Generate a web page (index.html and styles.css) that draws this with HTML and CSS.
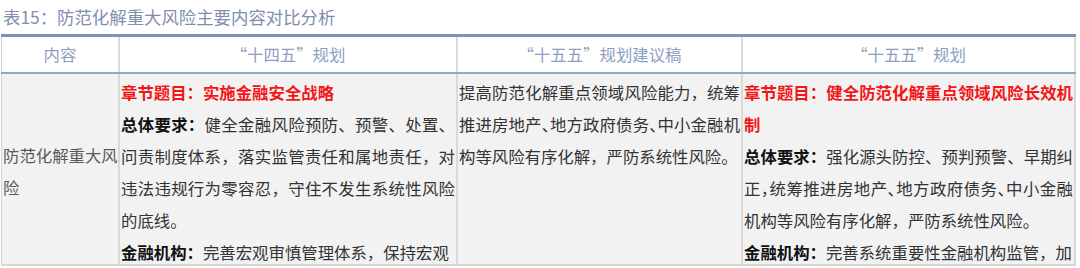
FILE: index.html
```html
<!DOCTYPE html>
<html lang="zh-CN">
<head>
<meta charset="utf-8">
<title>表15：防范化解重大风险主要内容对比分析</title>
<link rel="stylesheet" href="styles.css">
</head>
<body>
<div class="page">
  <div class="caption">表15：防范化解重大风险主要内容对比分析</div>
  <div class="table">
    <div class="row head">
      <div class="cell c1">内容</div>
      <div class="cell c2">“十四五”规划</div>
      <div class="cell c3">“十五五”规划建议稿</div>
      <div class="cell c4">“十五五”规划</div>
    </div>
    <div class="row body">
      <div class="cell c1 topic"><span>防范化解重大风险</span></div>
      <div class="cell c2 text">
        <p class="chapter">章节题目：实施金融安全战略</p>
        <p><b>总体要求：</b>健全金融风险预防、预警、处置、问责制度体系，落实监管责任和属地责任，对违法违规行为零容忍，守住不发生系统性风险的底线。</p>
        <p><b>金融机构：</b>完善宏观审慎管理体系，保持宏观</p>
      </div>
      <div class="cell c3 text">
        <p>提高防范化解重点领域风险能力，统筹推进房地产<span class="half">、</span>地方政府债务<span class="half">、</span>中小金融机构等风险有序化解，严防系统性风险。</p>
      </div>
      <div class="cell c4 text">
        <p class="chapter">章节题目：健全防范化解重点领域风险长效机制</p>
        <p><b>总体要求：</b>强化源头防控、预判预警、早期纠正<span class="half">，</span>统筹推进房地产<span class="half">、</span>地方政府债务<span class="half">、</span>中小金融机构等风险有序化解，严防系统性风险。</p>
        <p><b>金融机构：</b>完善系统重要性金融机构监管，加</p>
      </div>
    </div>
  </div>
</div>
</body>
</html>
```
FILE: styles.css
```css
html, body {
  margin: 0;
  padding: 0;
  background: #ffffff;
}

body {
  font-family: "Noto Sans CJK SC", "Noto Sans", sans-serif;
}

.page {
  width: 1080px;
  height: 268px;
  overflow: hidden;
}

.caption {
  height: 34px;
  line-height: 34px;
  padding-left: 3px;
  font-size: 17.4px;
  color: #7f8eae;
  white-space: nowrap;
}

.table {
  margin-left: 1px;
  width: 1075px;
  border-top: 3px solid #7d91bc;
}

.row {
  display: grid;
  grid-template-columns: 119px 338px 285px 333px;
}

.cell {
  box-sizing: border-box;
  border-right: 2px solid #dadada;
  font-size: 16.4px;
}

.cell.c1 {
  border-left: 1px solid #d2d2d2;
}

.row.head {
  border-bottom: 2px solid #91a4cb;
  background: #ffffff;
}

.row.head .cell {
  height: 35px;
  line-height: 35px;
  text-align: center;
  color: #8d9ec2;
}

.row.body {
  height: 190px;
  background: #f2f2f2;
  border-bottom: 2px solid #d6d6d6;
}

.row.body .cell {
  height: 190px;
  overflow: hidden;
  line-height: 32px;
}

.topic {
  display: flex;
  align-items: center;
  padding: 3px 0 0 1px;
  color: #5a5a5a;
}

.text {
  padding: 1.5px 1px 0 1px;
  color: #333333;
  text-align: justify;
}

.text p {
  margin: 0;
}

.text b {
  color: #111111;
  font-weight: 700;
}

.text .chapter {
  color: #f31616;
  font-weight: 700;
}

.half {
  font-feature-settings: "halt";
}
```
